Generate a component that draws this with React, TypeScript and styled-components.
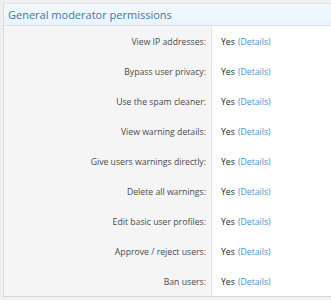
import React from "react";
import styled, { createGlobalStyle } from "styled-components";

const Global = createGlobalStyle`
  html, body { margin: 0; padding: 0; background: #f0f0f0; }
  body { font-family: "Open Sans", "Noto Sans", sans-serif; overflow: hidden; }
`;

const Block = styled.section`
  margin: 3px 0 0 3px;
  background: #fff;
  border-left: 1px solid #dcdcdc;
  border-top: 1px solid #e2e8ee;
  border-bottom: 1px solid #d6d6d6;
`;

const Header = styled.h2`
  margin: 0;
  height: 21px;
  display: flex;
  align-items: center;
  padding: 0 4px;
  font-size: 11px;
  font-weight: 400;
  color: #3e76a8;
  background: linear-gradient(to bottom, #f2f8fd, #eaf4fc);
  border-bottom: 1px solid #d7e3ee;
`;

const Row = styled.div`
  display: grid;
  grid-template-columns: 208px 1fr;
  height: 30px;
`;

const Label = styled.div`
  background: #f5f5f5;
  border-right: 1px solid #e3e3e3;
  display: flex;
  align-items: center;
  justify-content: flex-end;
  padding: 1px 5px 0 0;
  font-size: 8.7px;
  color: #4a4a4a;
`;

const Value = styled.div`
  display: flex;
  align-items: center;
  padding: 1px 0 0 9px;
  font-size: 8.7px;
  color: #262626;
  gap: 3px;
`;

const Link = styled.a`
  color: #4a92c6;
  text-decoration: none;
`;

const perms = [
  "View IP addresses:",
  "Bypass user privacy:",
  "Use the spam cleaner:",
  "View warning details:",
  "Give users warnings directly:",
  "Delete all warnings:",
  "Edit basic user profiles:",
  "Approve / reject users:",
  "Ban users:",
];

export default function App() {
  return (
    <>
      <Global />
      <Block>
        <Header>General moderator permissions</Header>
        {perms.map((p) => (
          <Row key={p}>
            <Label>{p}</Label>
            <Value>
              Yes <Link href="#">(Details)</Link>
            </Value>
          </Row>
        ))}
      </Block>
    </>
  );
}
